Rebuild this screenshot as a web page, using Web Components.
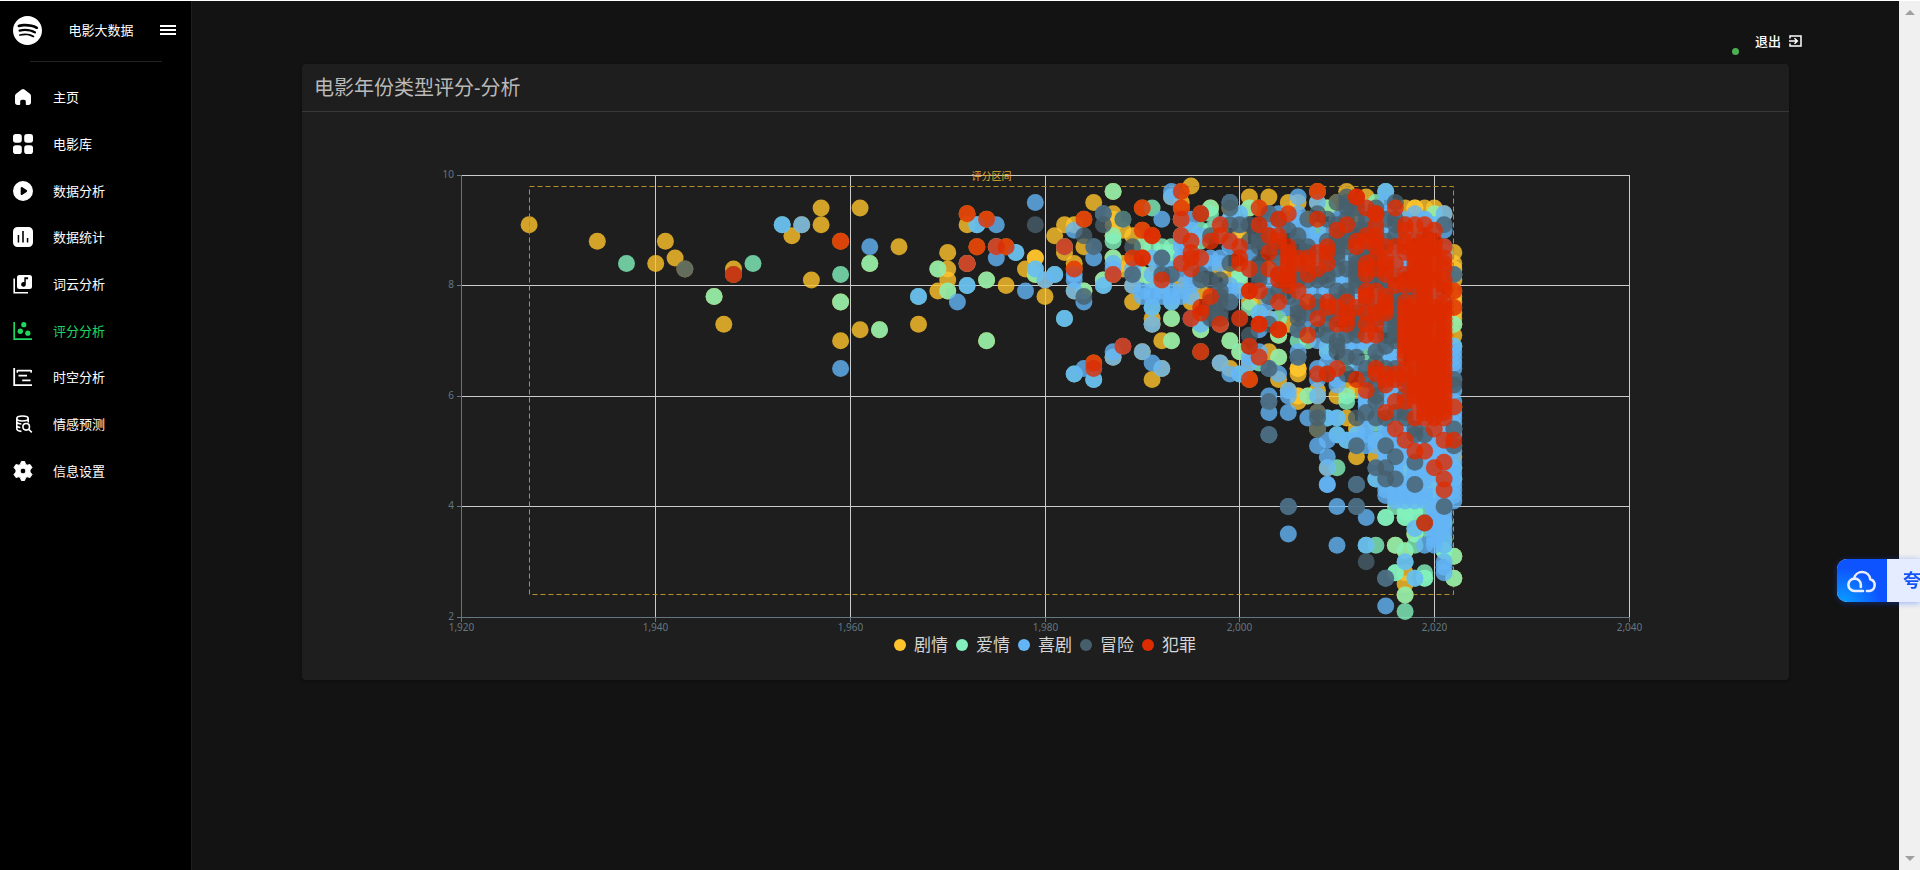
<!DOCTYPE html>
<html lang="zh-CN">
<head>
<meta charset="utf-8">
<meta name="viewport" content="width=device-width, initial-scale=1">
<title>电影大数据</title>
<style>
  body {
    margin: 0;
    background: #131313;
    color: #fff;
    font: 13px/20px "Noto Sans", "Noto Sans CJK SC", sans-serif;
  }
</style>
</head>
<body>
<movie-app>
  <side-nav slot="nav"></side-nav>
  <top-bar></top-bar>
  <panel-card>
    <span slot="title">电影年份类型评分-分析</span>
    <rating-chart></rating-chart>
  </panel-card>
</movie-app>
<cloud-badge></cloud-badge>

<script>
// <movie-app> — page shell: navigation, content column, scroll track.
class MovieApp extends HTMLElement {
  connectedCallback() {
    this.attachShadow({ mode: "open" }).innerHTML = `
      <style>
        :host {
          display: grid;
          grid-template-columns: 192px minmax(0, 1fr) 21px;
          min-height: 100vh;
          box-sizing: border-box;
          border-top: 1px solid #fff;
        }
        .track {
          display: flex;
          flex-direction: column;
          justify-content: space-between;
          align-items: center;
          padding: 9px 0;
          background: #f0f0f0;
        }
        svg {
          display: block;
          fill: #a0a0a0;
        }
      </style>
      <slot name="nav"></slot>
      <main><slot></slot></main>
      <div class="track" aria-hidden="true">
        <svg width="10" height="5"><path d="M5 0l5 5H0z"/></svg>
        <svg width="10" height="5"><path d="M5 5L0 0h10z"/></svg>
      </div>
    `;
  }
}

const icons = {
  home: `<path d="M10.6 4.5a2.4 2.4 0 0 1 2.8 0l5.2 3.9c.9.7 1.4 1.6 1.4 2.7v6.4c0 1.5-1.1 2.5-2.5 2.5h-1.700c-.6 0-1-.4-1-1v-2.500c0-1-.8-1.700-1.800-1.700h-2c-1 0-1.800.7-1.800 1.700V19c0 .6-.4 1-1 1H6.500C5.100 20 4 19 4 17.500v-6.400c0-1.100.5-2 1.400-2.700z"/>`,
  grid: `<rect x="2" y="2" width="8.800" height="8.800" rx="2.800"/><rect x="13.200" y="2" width="8.800" height="8.800" rx="2.800"/><rect x="2" y="13.200" width="8.800" height="8.800" rx="2.800"/><rect x="13.200" y="13.200" width="8.800" height="8.800" rx="2.800"/>`,
  play: `<path fill-rule="evenodd" d="M12 2a10 10 0 1 0 0 20 10 10 0 0 0 0-20zM9.700 9.200c0-.9.900-1.400 1.700-1l4.200 2.800c.7.5.7 1.500 0 2l-4.200 2.800c-.8.500-1.700 0-1.700-.9z"/>`,
  bars: `<path fill-rule="evenodd" d="M6.500 2h11A4.500 4.500 0 0 1 22 6.500v11a4.500 4.500 0 0 1-4.500 4.500h-11A4.500 4.500 0 0 1 2 17.500v-11A4.500 4.500 0 0 1 6.500 2zm.2 8v7.500h1.500V10zm4.500-4v11.500h1.600V6zm4.600 7v4.500h1.500V13z"/>`,
  music: `<path d="M3.200 6.500v14.300H17" fill="none" stroke="currentColor" stroke-width="1.600"/><path fill-rule="evenodd" d="M8.500 3h10A2.500 2.500 0 0 1 21 5.500v9a2.500 2.500 0 0 1-2.500 2.500h-10A2.500 2.500 0 0 1 6 14.500v-9A2.500 2.500 0 0 1 8.500 3zm4.800 2.200v5a2.300 2.300 0 1 0 1.500 2.200V7.200h2.300v-2z"/>`,
  scatter: `<path d="M3.200 3v17.200H21" fill="none" stroke="currentColor" stroke-width="1.700"/><circle cx="12.800" cy="5.700" r="2.600"/><circle cx="9.300" cy="12.300" r="2.700"/><circle cx="16.800" cy="14.200" r="2.600"/>`,
  gantt: `<path d="M3.200 3v17.200H21M6.500 5.700H20M7.500 10.700H16M11.200 15.400h8.300" fill="none" stroke="currentColor" stroke-width="1.800"/><path d="M6.300 5v2.800M20.200 5v2.800" stroke="currentColor" stroke-width="1.500"/>`,
  search: `<g fill="none" stroke="currentColor" stroke-width="1.600"><ellipse cx="11.500" cy="6.500" rx="5.700" ry="2.500"/><path d="M5.800 6.500v10.300c0 1.200 2 2.300 4.700 2.600M17.200 6.500v4M5.800 10.200c.7 1 2.300 1.700 4.600 1.800M5.800 14c.6.800 1.700 1.400 3.500 1.600"/><circle cx="15.200" cy="14.800" r="3.300"/><path d="M17.600 17.200l3.200 3.200"/></g>`,
  gear: `<path fill-rule="evenodd" d="M10.400 2.500h3.200l1 2.900 1.500.8 3-.6 1.900 3-2 2.300v2.200l2 2.300-1.900 3-3-.6-1.500.8-1 2.900h-3.200l-1-2.900-1.500-.8-3 .6-1.900-3 2-2.300v-2.200L3 8.600l1.900-3 3 .6 1.500-.8zM12 9.100a2.900 2.900 0 1 0 0 5.800 2.900 2.900 0 0 0 0-5.800z" stroke="currentColor" stroke-width="1" stroke-linejoin="round"/>`,
};

const pages = [
  ["home", "主页"],
  ["grid", "电影库"],
  ["play", "数据分析"],
  ["bars", "数据统计"],
  ["music", "词云分析"],
  ["scatter", "评分分析"],
  ["gantt", "时空分析"],
  ["search", "情感预测"],
  ["gear", "信息设置"],
];

// <side-nav> — brand row and page links.
class SideNav extends HTMLElement {
  connectedCallback() {
    const current = "scatter";
    this.attachShadow({ mode: "open" }).innerHTML = `
      <style>
        :host {
          display: block;
          background: #000;
          border-right: 1px solid #1e1e1e;
        }
        header {
          display: flex;
          align-items: center;
          height: 58px;
          padding: 0 15px 2px 13px;
        }
        svg {
          display: block;
          fill: currentColor;
        }
        .brand {
          flex: 1;
          text-align: center;
        }
        button {
          padding: 0;
          border: 0;
          background: none;
          color: inherit;
        }
        hr {
          margin: 0 29px 12px 30px;
          border: 0;
          border-top: 1px solid #222;
        }
        nav {
          display: grid;
          grid-auto-rows: 1fr;
          height: 420px;
        }
        a {
          display: flex;
          align-items: center;
          gap: 18px;
          padding-left: 11px;
          color: inherit;
          text-decoration: none;
        }
        a[aria-current] {
          color: #1ed760;
        }
      </style>
      <header>
        <svg width="29" height="29" viewBox="0 0 24 24"><path d="M12 0C5.400 0 0 5.400 0 12s5.400 12 12 12 12-5.400 12-12S18.660 0 12 0zm5.521 17.340c-.24.359-.66.48-1.021.24-2.820-1.740-6.360-2.101-10.561-1.141-.418.122-.779-.179-.899-.539-.12-.421.18-.78.54-.9 4.560-1.021 8.520-.6 11.640 1.320.42.18.479.659.301 1.020zm1.440-3.300c-.301.42-.841.6-1.262.3-3.239-1.980-8.159-2.580-11.939-1.380-.479.12-1.020-.12-1.140-.6-.12-.48.12-1.021.6-1.141C9.600 9.900 15 10.561 18.720 12.840c.361.181.54.78.241 1.200zm.12-3.360C15.240 8.400 8.820 8.160 5.160 9.301c-.6.179-1.200-.181-1.380-.721-.18-.601.18-1.200.72-1.381 4.260-1.260 11.280-1.020 15.721 1.621.539.3.719 1.020.419 1.560-.299.421-1.020.599-1.559.3z"/></svg>
        <span class="brand">电影大数据</span>
        <button aria-label="菜单"><svg width="16" height="12"><path d="M0 1h16v2H0zM0 5h16v2H0zM0 9h16v2H0z"/></svg></button>
      </header>
      <hr>
      <nav>
        ${pages.map(([icon, label]) => `
          <a href="#${icon}"${icon === current ? ' aria-current="page"' : ""}>
            <svg width="24" height="24" viewBox="0 0 24 24">${icons[icon]}</svg>${label}
          </a>`).join("")}
      </nav>
    `;
  }
}

// <top-bar> — status dot and sign-out link.
class TopBar extends HTMLElement {
  connectedCallback() {
    this.attachShadow({ mode: "open" }).innerHTML = `
      <style>
        :host {
          display: flex;
          justify-content: flex-end;
          align-items: flex-end;
          gap: 16px;
          box-sizing: border-box;
          height: 63px;
          padding: 0 97px 9px 0;
        }
        .dot {
          width: 7px;
          height: 7px;
          border-radius: 50%;
          background: #4caf50;
        }
        a {
          display: flex;
          align-items: center;
          gap: 8px;
          height: 28px;
          color: inherit;
          font-weight: 500;
          text-decoration: none;
        }
      </style>
      <span class="dot"></span>
      <a href="#logout">退出
        <svg width="13" height="12" fill="none" stroke="currentColor" stroke-width="1.500"><path d="M1 3.500V1h11v10H1V8.500M0 6h8M5.500 3.200L8.300 6 5.500 8.800"/></svg>
      </a>
    `;
  }
}

// <panel-card> — titled surface, content goes in the default slot.
class PanelCard extends HTMLElement {
  connectedCallback() {
    this.attachShadow({ mode: "open" }).innerHTML = `
      <style>
        :host {
          display: block;
          margin: 0 110px;
          border-radius: 4px;
          background: #1e1e1e;
          box-shadow: 0 1px 3px rgba(0, 0, 0, 0.4);
        }
        h2 {
          margin: 0;
          padding: 9px 12px 8px;
          border-bottom: 1px solid #383838;
          color: #b9b9b9;
          font-size: 20px;
          font-weight: 400;
          line-height: 30px;
        }
      </style>
      <h2><slot name="title"></slot></h2>
      <slot></slot>
    `;
  }
}

const series = [
  { key: "d", name: "剧情", color: "#ffc42b" },
  { key: "l", name: "爱情", color: "#82f1bd" },
  { key: "c", name: "喜剧", color: "#64b5f6" },
  { key: "a", name: "冒险", color: "#475f6c" },
  { key: "k", name: "犯罪", color: "#dd2c00" },
];

// Ratings by year, ten times the score, followed by the genre keys.
// "50-60c" is a run of films, one for every tenth of a point.
const films = {
  1927: "91d",
  1934: "88d",
  1937: "84l",
  1940: "84d",
  1941: "88d",
  1942: "85d",
  1943: "83da",
  1946: "78dl",
  1947: "73d",
  1948: "83d 82dak",
  1950: "84l",
  1953: "91lc",
  1954: "89d",
  1955: "91dc",
  1956: "81d",
  1957: "94d 91d",
  1959: "88dk 82l 77dl 70d 65c",
  1961: "94d 72d",
  1962: "87c 84dl",
  1963: "72dl",
  1965: "87d",
  1967: "78lc 73d",
  1969: "83dl 79d",
  1970: "86d 83d 81d 79dl",
  1971: "77c",
  1972: "93dk 91d 84dck 80lc",
  1973: "91lc 87dk",
  1974: "92dk 81dl 70dl",
  1975: "91c 87dck 85c",
  1976: "87dk 80d",
  1977: "86lc",
  1978: "83d 79c",
  1979: "95c 91a 85dd 82dl 83lc",
  1980: "81dc 78d",
  1981: "89d 82lc",
  1982: "91d 87dck 86d 74lc",
  1983: "91d 90c 84d 83dk 82c 81c 79dc 64lc",
  1984: "92dk 89a 87d 79dl 78a 77c 65c",
  1985: "95d 87ca 85c 66dk 65ck 63lc",
  1986: "93ca 91a 81dl 80lc",
  1987: "97dl 93d 92d 91d 89dl 88l 85dl 84c 83c 82dck 68c 67dc",
  1988: "92la 90d 84d 83d 69ck",
  1989: "89d 87a 85dk 83c 82ca 80dc 77d",
  1990: "94dk 90dk 87dl 85kk 82dl 79c 78c 68dc",
  1991: "94l 89dkk 87l 85lc 82dc 81dl 79c 78c 76lc 74d 73dc 66c 63d",
  1992: "92c 87l 86l 85ca 83c 82a 81dck 80d 79c 78c 70d 65dc",
  1993: "97c 96dc 87l 86l 85l 83c 82ca 79c 78c 77lc 74dl 70dl",
  1994: "97dk 95d 94dk 92dck 89dck 88c 87c 85c 84ck 82c 80d 79c 78c",
  1995: "98d 92c 90lc 88ck 87l 86ck 85k 83ck 81c 80c 78dc 77d 74ck",
  1996: "93dak 90l 89c 88l 85ck 84c 82a 81ca 79d 76k 75k 73c 72dl 68dak",
  1997: "94dl 93l 90l 89a 88k 85c 84c 81a 78dk 77a 75a 74a",
  1998: "91ck 89ck 90d 85c 84c 83d 81a 79ca 78a 77a 75a 74a 73dck 66dc",
  1999: "95ca 94da 92lc 91a 88ck 87c 84a 82d 80c 79c 77ca 70dl 65d 64c",
  2000: "93lc 91ca 89d 88d 87ck 85k 84k 82dl 81l 80d 79c 74ak 68dl 64lc",
  2001: "96d 94dl 91a 88a 86c 83dck 79kk 76l 77d 71a 69ak 66dc 67c 63dk",
  2002: "94dk 91ak 89a 88a 87a 84a 83a 82a 81a 79dck 75lc 78d 73kk 72c 68c 67ck 66l",
  2003: "96d 93ca 91c 89dak 87a 86k 83dk 82c 78a 80c 77c 74dc 73a 68d 65ca 60c 59ca 57c 53ca",
  2004: "93c 92ak 90c 89k 88k 87a 85a 84c 83l 82ak 81k 79a 78c 77dck 74l 72kk 71dl 67dl 64c 63d",
  2005: "95d 93dk 91c 90a 87k 86k 85k 84k 83k 82k 81k 80k 78a 76c 73d 61dc 60c 57c 40ca 35c",
  2006: "96c 95d 93c 92c 91c 89ca 87a 85k 84k 82ca 81a 79k 76a 75a 74a 72ca 70l 68c 67ca 65dd 64d 60dd 59d",
  2007: "92da 90c 87ca 86a 85k 84k 82k 81a 79c 77dk 75a 73c 71dk 70l 60dl 56c",
  2008: "97dk 95dc 93a 92k 90l 88c 86k 85c 83k 81a 79c 77ca 76a 74dck 72a 65c 64k 63c 61d 60dc 57da 56a 54da 51c",
  2009: "94dl 92a 90c 88l 87k 86k 84k 83c 81a 79c 77k 76dk 73ca 71ca 68lc 66c 64ak 56lc 52c 49c 47dc 44cc",
  2010: "95da 90k 91a 89a 88a 87a 86a 84c 82l 81c 79ca 77c 76k 75c 73k 71c 69a 68a 65ck 63c 62c 60d 56lc 53lc 47l 40c 33c",
  2011: "97d 96a 95a 94ca 92a 91k 89ca 87a 86d 85c 83a 81c 79ca 77k 75k 74k 73k 71ca 69c 67a 66l 64a 61d 59l 60l 56d 52lc",
  2012: "96kk 94a 93d 92da 90a 88k 87k 85a 84a 82a 81a 79l 78c 76k 75c 74a 73a 71ca 69c 67a 66c 63k 61d 56a 54d 53lc 52c 51ca 49d 44ca 40ca",
  2013: "96d 94dck 92a 91c 89k 88k 86a 84k 83k 82k 80a 79k 78kk 76c 75k 73k 72c 71k 69l 66l 65ca 63a 61dk 59c 57a 54c 53c 51c 38c 33lc 30a",
  2014: "95l 94a 93kk 91ck 89k 88k 87k 85k 83k 81a 79k 76k 75k 73k 71k 70c 68ca 65k 64k 62a 60ca 59a 56ca 55l 52lc 51c 49d 47ca 45lc 33l",
  2015: "97lc 95c 93c 92a 91c 90d 89c 88a 87k 85k 84k 83k 82k 80c 79a 78k 77k 76kk 75ak 73c 71a 69a 66lc 64k 63k 62k 58-60c 57k 56a 54c 53c 51ca 49c 47ca 45ca 43c 42c 38ll 27ca 22c",
  2016: "95a 94dk 92a 91a 89a 87k 86c 85c 83c 81k 80k 78a 77a 76a 75a 74a 73a 72a 71a 70a 68lc 66c 64k 63k 62c 59k 57a 56c 54ck 52c 51c 49ca 47c 45ca 43c 42c 41c 40l 33dl 28ll",
  2017: "94d 92c 91k 90k 89c 88k 87k 86k 84c 82k 81k 80k 79a 77k 76k 67-75k 65k 64k 63a 62k 60a 59k 57a 56a 54c 52k 50c 49c 47dl 46l 45c 43c 42c 41c 39l 38ll 32dl 30lc 28d 26d 24dl 21l",
  2018: "94d 93c 91dk 90c 80-88k 79a 77k 76k 66-75k 64k 63k 60-62k 59ck 57c 56k 54a 53a 50k 48ca 46lc 44ca 42lc 41c 39l 38l 36lc 35dl 33l 27lc",
  2019: "94d 92cc 56-89k 55c 53a 52c 50dk 48c 47l 46c 44d 43c 42lc 41c 37dak 36l 33c 28l 27ll",
  2020: "94d 93dl 91c 90k 88k 87k 86k 85k 84c 83k 82k 81k 80k 78c 73-77k 72c 71k 70k 56-67k 54ck 52c 51c 49c 47k 45c 44dl 43l 41l 40lc 39c 38c 37c 36c 35c 34c 33c",
  2021: "93dc 91ca 90c 87ck 85ck 83k 82c 81k 80k 79k 56-77k 55c 54c 52k 50c 49c 48ck 46c 45ck 43ck 40ca 38c 37lc 36c 35c 34l 32ll 30c 29c 28c",
  2022: "86d 84d 83d 82dca 79dk 78d 76dk 74d 73dl 71d 69lc 68c 67c 66c 65c 63ca 62a 58dk 54lca 52k 51ca 49d 47lc 46c 45lc 44c 43c 42c 41c 31dl 27dl",
};

// Comedies fill the recent years behind the rest of the films.
const fill = {
  2006: "84c 79c 77c",
  2007: "89c 84c 80c 75c",
  2008: "88c 84c 82ca 75c 70c",
  2009: "88ca 85a 82a 78c 75ca 72l 69l",
  2010: "92c 89c 85ca 83a 80c 77ca 74a 70ca",
  2011: "91c 88a 84c 80c 78ca 75a 68c",
  2012: "95a 89a 86c 83a 80ca 77c 75ca 72a 69c",
  2013: "93c 90a 87c 85a 81c 77a 74a 70c 63c 56-60c",
  2014: "92c 90a 86a 82a 78c 74ca 66a 63c 57c",
  2015: "85c 81ca 74ca 68c 65a 63c 50c 48c 46c 44c",
  2016: "93c 90c 84k 75-79c 67c 65ca 60c 58c 50c 48c 46c 44c",
  2017: "85c 79c 64c 61c 58c 55c 53c 51c 48c 44lc 40l",
  2018: "94d 86c 78c 65c 58c 57c 55c 52c 51c 49c 47c 45c 43c 40l",
  2019: "91k 58c 54c 51c 49c 45c 40l",
  2020: "80c 68-69k 55c 53c 50c 48c 46c 42c",
  2021: "86c 84k 77c 53c 51c 47c 44c 42c 41c 39c 33c",
  2022: "81d 77d 75d 61c 59c 57c 56c 55c 53c 50c 48c",
};

function readFilms(table) {
  const points = [];
  for (const [year, text] of Object.entries(table)) {
    for (const token of text.split(" ")) {
      const [, from, to, keys] = token.match(/^(\d+)(?:-(\d+))?(\w+)$/);
      for (let score = +from; score <= +(to ?? from); score++) {
        for (const key of keys) points.push({ year: +year, score: score / 10, key });
      }
    }
  }
  return points;
}

// <rating-chart> — scatter of score against release year, one colour per genre.
class RatingChart extends HTMLElement {
  connectedCallback() {
    this.points = [...readFilms(fill), ...readFilms(films)];
    this.attachShadow({ mode: "open" }).innerHTML = `
      <style>
        :host {
          display: block;
          padding: 0 14px 23px 13px;
        }
        svg {
          display: block;
          width: 100%;
          height: 521px;
        }
        .split {
          stroke: #ccc;
        }
        .axis {
          fill: none;
          stroke: #627782;
        }
        .tick {
          fill: #627782;
          font-size: 10px;
        }
        .area {
          fill: none;
          stroke: #b88f26;
          stroke-dasharray: 5 3;
        }
        .area-label {
          fill: #e0b02e;
          font-size: 10px;
        }
        .legend {
          display: flex;
          justify-content: center;
          gap: 8px;
        }
        button {
          display: flex;
          align-items: center;
          gap: 8px;
          height: 24px;
          padding: 0;
          border: 0;
          background: none;
          color: #d6d6d6;
          font: inherit;
          font-size: 17px;
          line-height: 24px;
        }
        i {
          width: 12px;
          height: 12px;
          border-radius: 50%;
        }
      </style>
      <svg role="img" aria-label="评分区间"></svg>
      <div class="legend">
        ${series.map((s) => `<button><i style="background: ${s.color}"></i>${s.name}</button>`).join("")}
      </div>
    `;
    this.svg = this.shadowRoot.querySelector("svg");
    this.draw();
    new ResizeObserver(() => this.draw()).observe(this.svg);
  }

  draw() {
    const width = this.svg.clientWidth;
    const left = Math.round(width * 0.1);
    const right = width - left;
    const top = 63;
    const bottom = 505;
    const x = (year) => left + ((year - 1920) / 120) * (right - left);
    const y = (score) => bottom - ((score - 2) / 8) * (bottom - top);
    const crisp = (value) => Math.floor(value) + 0.5;

    let grid = "";
    for (let year = 1920; year <= 2040; year += 20) {
      const px = crisp(x(year));
      if (year > 1920) grid += `<path class="split" d="M${px} ${top}V${bottom}"/>`;
      grid += `<path class="axis" d="M${px} ${bottom}v5"/>`;
      grid += `<text class="tick" text-anchor="middle" x="${px}" y="519">${year.toLocaleString("en-US")}</text>`;
    }
    for (let score = 2; score <= 10; score += 2) {
      const py = crisp(y(score));
      if (score > 2) grid += `<path class="split" d="M${left} ${py}H${right}"/>`;
      grid += `<path class="axis" d="M${left - 4} ${py}h4"/>`;
      grid += `<text class="tick" text-anchor="end" x="${left - 7}" y="${py + 2}">${score}</text>`;
    }
    grid += `<path class="axis" d="M${left + 0.5} ${top}V${bottom + 0.5}H${right}"/>`;

    const layers = series.map((s) => {
      const dots = this.points
        .filter((p) => p.key === s.key)
        .map((p) => `<circle cx="${x(p.year).toFixed(1)}" cy="${y(p.score).toFixed(1)}" r="8.500"/>`);
      return `<g fill="${s.color}" fill-opacity="0.8">${dots.join("")}</g>`;
    });

    const x1 = crisp(x(1927));
    const x2 = crisp(x(2022));
    const y1 = crisp(y(9.8));
    const y2 = crisp(y(2.4));
    const area = `
      <path class="area" d="M${x1} ${y1}H${x2}V${y2}H${x1}z"/>
      <text class="area-label" text-anchor="middle" x="${(x1 + x2) / 2}" y="${y1 - 7}">评分区间</text>`;

    layers.splice(1, 0, area);
    this.svg.innerHTML = grid + layers.join("");
  }
}

// <cloud-badge> — floating drive shortcut docked to the window's right edge.
class CloudBadge extends HTMLElement {
  connectedCallback() {
    this.attachShadow({ mode: "open" }).innerHTML = `
      <style>
        :host {
          position: fixed;
          top: 559px;
          right: 0;
          display: flex;
          width: 83px;
          height: 43px;
          overflow: hidden;
          border-radius: 10px 0 0 10px;
          background: #e6ecff;
          box-shadow: 0 1px 6px rgba(13, 83, 255, 0.4);
        }
        .icon {
          display: flex;
          flex: none;
          justify-content: center;
          align-items: center;
          width: 50px;
          background: radial-gradient(circle at 10% 110%, #0aa5ff, #0d53ff 60%);
        }
        .label {
          flex: none;
          padding-left: 16px;
          color: #1454f5;
          font-size: 18px;
          font-weight: 700;
          line-height: 43px;
        }
      </style>
      <span class="icon">
        <svg width="30" height="24" viewBox="0 0 30 24" fill="none" stroke="#e8eeff" stroke-width="2.600" stroke-linecap="round">
          <path d="M16 22H7.500a6.200 6.200 0 1 1 6.300-6.200v2.200M7 9.400a8.300 8.300 0 0 1 16.300.9A6 6 0 0 1 22.500 22H20"/>
        </svg>
      </span>
      <span class="label">夸</span>
    `;
  }
}

customElements.define("movie-app", MovieApp);
customElements.define("side-nav", SideNav);
customElements.define("top-bar", TopBar);
customElements.define("panel-card", PanelCard);
customElements.define("rating-chart", RatingChart);
customElements.define("cloud-badge", CloudBadge);
</script>
</body>
</html>
